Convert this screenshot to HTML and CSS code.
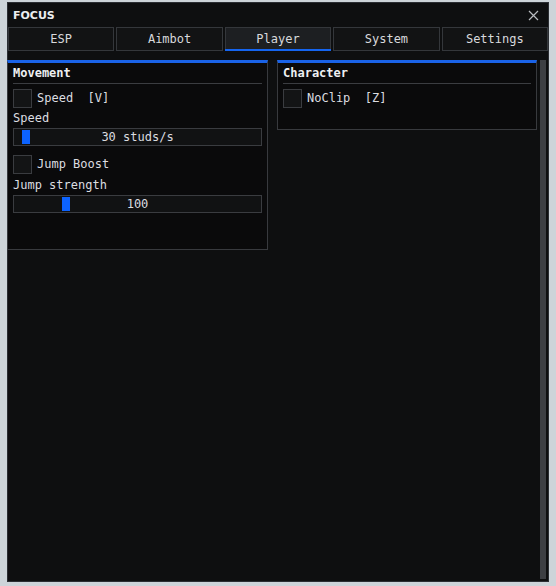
FILE: index.html
```html
<!DOCTYPE html>
<html lang="en">
<head>
  <meta charset="UTF-8" />
  <title>FOCUS</title>
  <link rel="stylesheet" href="styles.css">
</head>
<body>
  <div class="window">
    <div class="titlebar">
      <span class="title">FOCUS</span>
      <svg class="close" width="11" height="11" viewBox="0 0 11 11"><path d="M1 1L10 10M10 1L1 10" stroke="#b9bcc0" stroke-width="1.2"/></svg>
    </div>
    <div class="tabs">
      <div class="tab">ESP</div>
      <div class="tab">Aimbot</div>
      <div class="tab active">Player</div>
      <div class="tab">System</div>
      <div class="tab">Settings</div>
    </div>
    <div class="content">
      <div class="columns">
        <div class="panel left">
          <div class="panel-title">Movement</div>
          <div class="check"><span class="box"></span>Speed  [V]</div>
          <div class="label">Speed</div>
          <div class="slider"><span class="handle" style="left: 8px"></span>30 studs/s</div>
          <div class="check"><span class="box"></span>Jump Boost</div>
          <div class="label">Jump strength</div>
          <div class="slider"><span class="handle" style="left: 48px"></span>100</div>
        </div>
        <div class="panel right">
          <div class="panel-title">Character</div>
          <div class="check"><span class="box"></span>NoClip  [Z]</div>
        </div>
      </div>
      <div class="scrollbar"></div>
    </div>
  </div>
</body>
</html>
```

FILE: styles.css
```css
body {
  margin: 0;
  padding: 0;
  background: #cdd4d9;
  font-family: 'DejaVu Sans Mono', monospace;
  font-size: 12px;
  color: #dcdde0;
}
.window {
  margin: 2px 0 0 7px;
  width: 540px;
  height: 578px;
  background: #0e0f10;
  border: 1px solid #2b2e33;
  display: flex;
  flex-direction: column;
}
.titlebar {
  height: 24px;
  display: flex;
  align-items: center;
  justify-content: space-between;
  padding: 0 9px 0 5px;
}
.title {
  font-family: 'DejaVu Sans', sans-serif;
  font-weight: bold;
  font-size: 11px;
  color: #eceef0;
}
.close {
  margin-top: 1px;
}
.tabs {
  display: flex;
  gap: 2px;
  height: 24px;
}
.tab {
  flex: 1;
  background: #121314;
  border: 1px solid #34373b;
  display: flex;
  align-items: center;
  justify-content: center;
  color: #d8d9dc;
  position: relative;
}
.tab.active {
  background: #1d1f22;
}
.tab.active::after {
  content: "";
  position: absolute;
  left: -1px;
  right: -1px;
  bottom: -1px;
  height: 2px;
  background: #1565f0;
}
.content {
  flex: 1;
  display: flex;
  padding-top: 9px;
  min-height: 0;
}
.columns {
  flex: 1;
  display: flex;
  gap: 9px;
  align-items: flex-start;
}
.panel {
  background: #0a0a0b;
  border: 1px solid #383a3e;
  border-top: 3px solid #1a63e8;
  padding: 0 5px 0 5px;
  box-sizing: border-box;
}
.panel.left {
  width: 261px;
  height: 190px;
  margin-left: -1px;
}
.panel.right {
  width: 260px;
  height: 70px;
}
.panel-title {
  font-weight: bold;
  color: #eef0f2;
  height: 20px;
  line-height: 20px;
  border-bottom: 1px solid #3b3d41;
  margin-bottom: 4px;
}
.check {
  display: flex;
  align-items: center;
  height: 20px;
  white-space: pre;
  margin-bottom: 1px;
}
.slider + .check {
  margin-bottom: 2px;
}
.box {
  width: 17px;
  height: 17px;
  border: 1px solid #3a3c40;
  background: #131415;
  margin-right: 5px;
}
.label {
  height: 19px;
  line-height: 19px;
}
.slider {
  position: relative;
  height: 16px;
  border: 1px solid #3a3c40;
  background: #111213;
  display: flex;
  align-items: center;
  justify-content: center;
  margin-bottom: 8px;
}
.handle {
  position: absolute;
  top: 1px;
  width: 8px;
  height: 14px;
  background: #0c63ff;
}
.scrollbar {
  width: 6px;
  margin: 0 2px 2px 3px;
  background: #3d3f43;
}
```
